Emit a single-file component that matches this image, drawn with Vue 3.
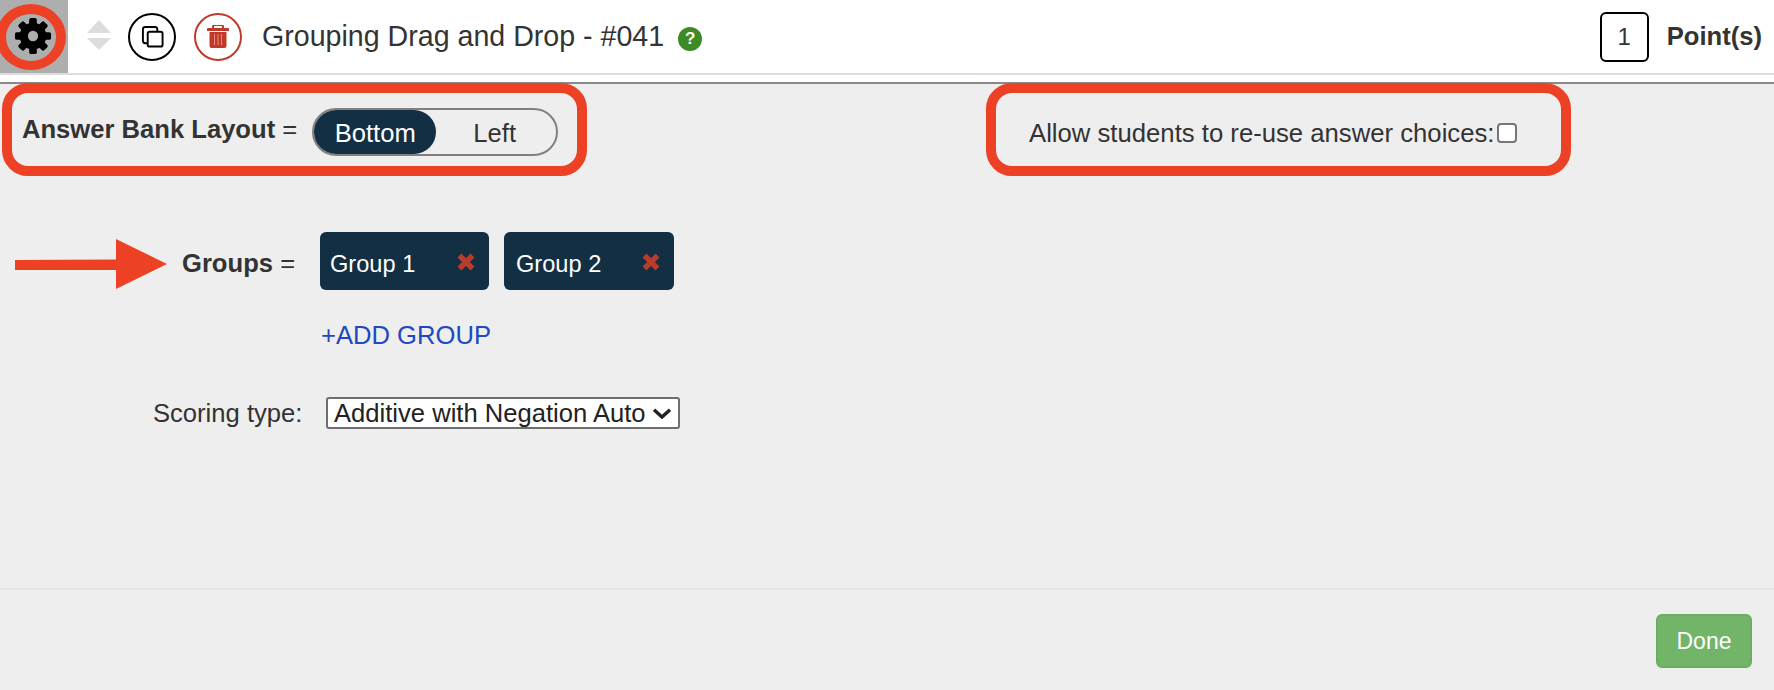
<script setup>
const groups = ['Group 1', 'Group 2']
const teeth = [0, 45, 90, 135, 180, 225, 270, 315]
</script>

<template>
  <div class="page">
    <header class="topbar">
      <div class="gear-box">
        <svg class="gear" viewBox="0 0 40 40" width="38" height="38">
          <rect v-for="t in teeth" :key="t" x="16" y="1" width="8" height="10" rx="2" fill="#000" :transform="`rotate(${t} 20 20)`" />
          <circle cx="20" cy="20" r="14" fill="#000" />
          <circle cx="20" cy="20" r="5.400" fill="#aeaeae" />
        </svg>
        <span class="gear-ring"></span>
      </div>
      <svg class="sort" viewBox="0 0 24 30" width="24" height="30">
        <path d="M12 0 24 13H0Z" fill="#dcdcdc" />
        <path d="M0 18H24L12 30Z" fill="#dcdcdc" />
      </svg>
      <button class="round copy">
        <svg viewBox="0 0 24 24" width="23" height="23" fill="none" stroke="#000" stroke-width="2">
          <path d="M7 19H4.500A2.500 2.500 0 0 1 2 16.500V4.500A2.500 2.500 0 0 1 4.500 2H14.500A2.500 2.500 0 0 1 17 4.500V7" />
          <rect x="7" y="7" width="15.500" height="15.500" rx="2" />
        </svg>
      </button>
      <button class="round trash">
        <svg viewBox="0 0 22 23" width="22" height="23">
          <path d="M6 3V2A2 2 0 0 1 8 0H14A2 2 0 0 1 16 2V3" fill="none" stroke="#c0392b" stroke-width="2" />
          <path d="M1 3H21A1 1 0 0 1 22 4V6H0V4A1 1 0 0 1 1 3Z" fill="#c0392b" />
          <path d="M2.500 7H19.500V21A2 2 0 0 1 17.500 23H4.500A2 2 0 0 1 2.500 21Z" fill="#c0392b" />
          <path d="M7.500 9v11M11 9v11M14.500 9v11" stroke="#e58d82" stroke-width="1" />
        </svg>
      </button>
      <h1 class="title">Grouping Drag and Drop - #041</h1>
      <span class="help">?</span>
      <div class="points">
        <span class="points-box">1</span>
        <strong>Point(s)</strong>
      </div>
    </header>

    <main class="content">
      <section class="options">
        <div class="callout callout-left">
          <strong class="label">Answer Bank Layout <span class="eq">=</span></strong>
          <div class="toggle">
            <span class="toggle-on">Bottom</span>
            <span class="toggle-off">Left</span>
          </div>
        </div>
        <div class="callout callout-right">
          <span class="reuse">Allow students to re-use answer choices:</span>
          <span class="check"></span>
        </div>
      </section>

      <section class="groups-row">
        <svg class="arrow" viewBox="0 0 152 50" width="152" height="50">
          <path d="M0 21 101 20.500V0L152 25 101 50V31L0 31Z" fill="#ec4125" />
        </svg>
        <strong class="groups-label">Groups <span class="eq">=</span></strong>
        <div class="chips">
          <div v-for="g in groups" :key="g" class="chip">
            <span>{{ g }}</span>
            <svg viewBox="0 0 18 18" width="18" height="18">
              <path d="M2.500 2.500 15.500 15.500M15.500 2.500 2.500 15.500" stroke="#b93b2c" stroke-width="5.500" />
            </svg>
          </div>
        </div>
      </section>

      <a class="add">+ADD GROUP</a>

      <section class="scoring">
        <span class="scoring-label">Scoring type:</span>
        <div class="select">
          <span>Additive with Negation Auto</span>
          <svg viewBox="0 0 20 11" width="20" height="11" fill="none" stroke="#222" stroke-width="3.400">
            <path d="M2 1.800 10 9 18 1.800" />
          </svg>
        </div>
      </section>
    </main>

    <footer class="footer">
      <button class="done">Done</button>
    </footer>
  </div>
</template>

<style>
html, body { margin: 0; background: #eeeeee; }
</style>

<style scoped>
.page {
  width: 1774px;
  height: 690px;
  overflow: hidden;
  display: flex;
  flex-direction: column;
  background: #eeeeee;
  color: #333;
  font-family: "Liberation Sans", Arial, sans-serif;
}
.topbar {
  height: 73px;
  flex: none;
  display: flex;
  align-items: center;
  background: #fff;
  box-shadow: 0 2px 0 #dddddd, 0 9px 0 #fff, 0 11px 0 #8a8a8a;
  padding-right: 12px;
  position: relative;
  z-index: 1;
}
.gear-box {
  width: 68px;
  height: 73px;
  flex: none;
  background: #aeaeae;
  position: relative;
  overflow: hidden;
  display: flex;
  align-items: center;
  justify-content: center;
}
.gear { margin: -2px 3px 0 0; }
.gear-ring {
  position: absolute;
  left: -4px;
  top: 4px;
  width: 70px;
  height: 66px;
  box-sizing: border-box;
  border: 10px solid #ec4125;
  border-bottom-width: 9px;
  border-radius: 50%;
}
.sort { margin: -3px 0 0 19px; flex: none; }
.round {
  width: 48px;
  height: 48px;
  padding: 0;
  box-sizing: border-box;
  border-radius: 50%;
  background: #fff;
  display: flex;
  align-items: center;
  justify-content: center;
  flex: none;
}
.copy { border: 2px solid #000; margin-left: 17px; }
.trash { border: 2px solid #c0392b; margin-left: 18px; }
.title {
  margin: 0 0 0 20px;
  font-size: 28.6px;
  font-weight: 400;
  color: #333;
  white-space: nowrap;
}
.help {
  width: 24px;
  height: 24px;
  margin: 4px 0 0 14px;
  border-radius: 50%;
  background: #3d8b26;
  color: #fff;
  font-size: 17px;
  font-weight: 700;
  line-height: 24px;
  text-align: center;
}
.points {
  margin-left: auto;
  display: flex;
  align-items: center;
  gap: 18px;
  font-size: 25.6px;
}
.points-box {
  width: 49px;
  height: 50px;
  box-sizing: border-box;
  border: 2px solid #000;
  border-radius: 6px;
  background: #fff;
  font-size: 24px;
  line-height: 46px;
  text-align: center;
}
.content {
  flex: 1;
  padding-top: 10px;
  position: relative;
  z-index: 2;
}
.options {
  display: flex;
  padding-left: 2px;
  gap: 399px;
}
.callout {
  height: 93px;
  box-sizing: border-box;
  border: 10px solid #ec4125;
  border-radius: 26px;
  display: flex;
  align-items: center;
}
.callout-left { width: 585px; padding-left: 10px; }
.callout-right { width: 585px; padding-left: 33px; padding-top: 7px; }
.label { font-size: 25.6px; white-space: nowrap; }
.eq { font-weight: 400; }
.toggle {
  width: 246px;
  height: 48px;
  margin-left: 15px;
  margin-top: 5px;
  box-sizing: border-box;
  border: 2px solid #808080;
  border-radius: 24px;
  display: flex;
  align-items: center;
  font-size: 25.6px;
}
.toggle-on {
  width: 122px;
  height: 44px;
  background: #132f43;
  color: #fff;
  border-radius: 22px;
  line-height: 46px;
  text-align: center;
}
.toggle-off {
  flex: 1;
  text-align: center;
  padding: 2px 3px 0 0;
}
.reuse { font-size: 25.7px; white-space: nowrap; }
.check {
  width: 20px;
  height: 20px;
  margin: 0 0 0 3px;
  box-sizing: border-box;
  border: 2px solid #767676;
  border-radius: 4px;
  background: #fff;
}
.groups-row {
  display: flex;
  align-items: center;
  margin-top: 56px;
  padding-left: 15px;
}
.arrow { flex: none; margin-top: 6px; }
.groups-label {
  width: 136px;
  padding: 4px 0 0 15px;
  box-sizing: border-box;
  font-size: 25.6px;
  white-space: nowrap;
}
.chips { display: flex; gap: 15px; margin-left: 17px; }
.chip {
  width: 169px;
  height: 58px;
  box-sizing: border-box;
  padding: 0 14px 0 10px;
  border-radius: 6px;
  background: #132f43;
  color: #fff;
  font-size: 23.6px;
  display: flex;
  align-items: center;
  justify-content: space-between;
}
.chip + .chip { padding-left: 12px; width: 170px; }
.chip span { padding-top: 6px; }
.chip svg { margin-top: 2px; }
.add {
  display: block;
  margin: 29px 0 0 321px;
  color: #2149bf;
  font-size: 25.6px;
  line-height: 32px;
}
.scoring {
  display: flex;
  align-items: center;
  margin: 46px 0 0 153px;
}
.scoring-label { width: 173px; font-size: 25.6px; }
.select {
  width: 354px;
  height: 32px;
  box-sizing: border-box;
  border: 2px solid #6e6e6e;
  border-radius: 3px;
  background: #fff;
  color: #222;
  font-size: 25.6px;
  padding: 0 6px 0 6px;
  display: flex;
  align-items: center;
  justify-content: space-between;
  white-space: nowrap;
}
.footer {
  height: 102px;
  flex: none;
  box-sizing: border-box;
  border-top: 2px solid #e6e6e6;
  display: flex;
  justify-content: flex-end;
  padding: 24px 22px 0 0;
}
.done {
  width: 96px;
  height: 54px;
  padding: 0;
  border: 2px solid #6aae60;
  border-radius: 6px;
  background: #72b568;
  color: #fff;
  font-family: inherit;
  font-size: 23px;
}
</style>
